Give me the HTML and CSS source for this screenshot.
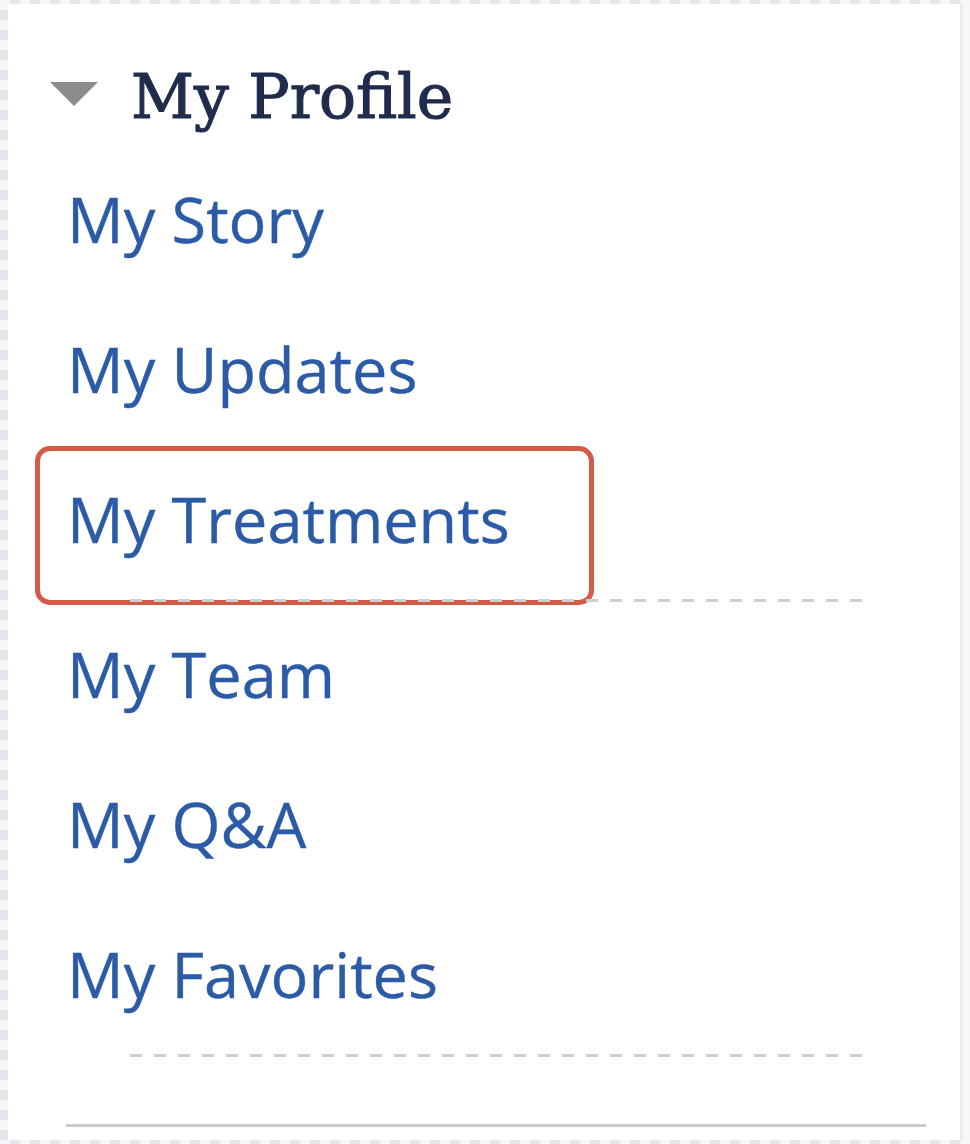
FILE: index.html
```html
<!DOCTYPE html>
<html lang="en">
<head>
<meta charset="utf-8">
<title>My Profile</title>
<link rel="stylesheet" href="styles.css">
</head>
<body>
<nav class="card">
  <div class="section-head">
    <span class="caret" aria-hidden="true"></span>
    <h2 class="section-title">My Profile</h2>
  </div>
  <ul class="links">
    <li class="link-item"><a class="link" href="#">My Story</a></li>
    <li class="link-item"><a class="link" href="#">My Updates</a></li>
    <li class="link-item highlighted"><a class="link" href="#">My Treatments</a></li>
  </ul>
  <div class="sep-dashed first"></div>
  <ul class="links after-sep">
    <li class="link-item"><a class="link" href="#">My Team</a></li>
    <li class="link-item"><a class="link" href="#">My Q&amp;A</a></li>
    <li class="link-item"><a class="link" href="#">My Favorites</a></li>
  </ul>
  <div class="sep-dashed last"></div>
  <div class="sep-solid"></div>
</nav>
</body>
</html>
```
FILE: styles.css
```css
html, body {
  margin: 0;
  padding: 0;
}
body {
  width: 970px;
  height: 1144px;
  overflow: hidden;
  background-color: #f4f5f7;
  background-image: repeating-conic-gradient(#e3e6ea 0 25%, #f5f6f8 0 50%);
  background-size: 20px 20px;
}
.card {
  box-sizing: border-box;
  margin: 4px 7px 0 8px;
  height: 1136px;
  background: #ffffff;
  border-right: 3px solid #ebebeb;
  box-shadow: 7px 0 0 #f7f7f7;
  padding: 62px 0 0 42px;
  display: flex;
  flex-direction: column;
}
.section-head {
  display: flex;
  align-items: flex-start;
  gap: 33px;
  height: 62px;
}
.caret {
  width: 0;
  height: 0;
  margin-top: 16px;
  border-left: 24px solid transparent;
  border-right: 24px solid transparent;
  border-top: 24px solid #8c8c8c;
}
.section-title {
  margin: 0;
  font-family: "DejaVu Serif", serif;
  font-weight: normal;
  font-size: 61.5px;
  line-height: 62px;
  color: #1f2c4c;
  -webkit-text-stroke: 1.2px #1f2c4c;
}
.links {
  list-style: none;
  margin: 46px 0 0 17px;
  padding: 0;
  display: flex;
  flex-direction: column;
  gap: 60px;
}
.links.after-sep {
  margin-top: 27px;
}
.link-item {
  position: relative;
  height: 90px;
}
.link {
  font-family: "Open Sans", sans-serif;
  font-size: 63px;
  line-height: 90px;
  color: #2b5aa7;
  text-decoration: none;
  -webkit-text-stroke: 0.4px #2b5aa7;
}
.highlighted::after {
  content: "";
  position: absolute;
  box-sizing: border-box;
  left: -32px;
  top: -28px;
  width: 559px;
  height: 159px;
  border: 5px solid #d35b47;
  border-radius: 15px;
}
.sep-dashed {
  margin-left: 80px;
  width: 732px;
  height: 3px;
  background-image: repeating-linear-gradient(to right, #cfcfcf 0 12px, transparent 12px 24px);
  margin-top: 35px;
  position: relative;
}
.sep-solid {
  margin: 67px 0 0 16px;
  width: 860px;
  height: 3px;
  background: #cbcbcb;
}
```
